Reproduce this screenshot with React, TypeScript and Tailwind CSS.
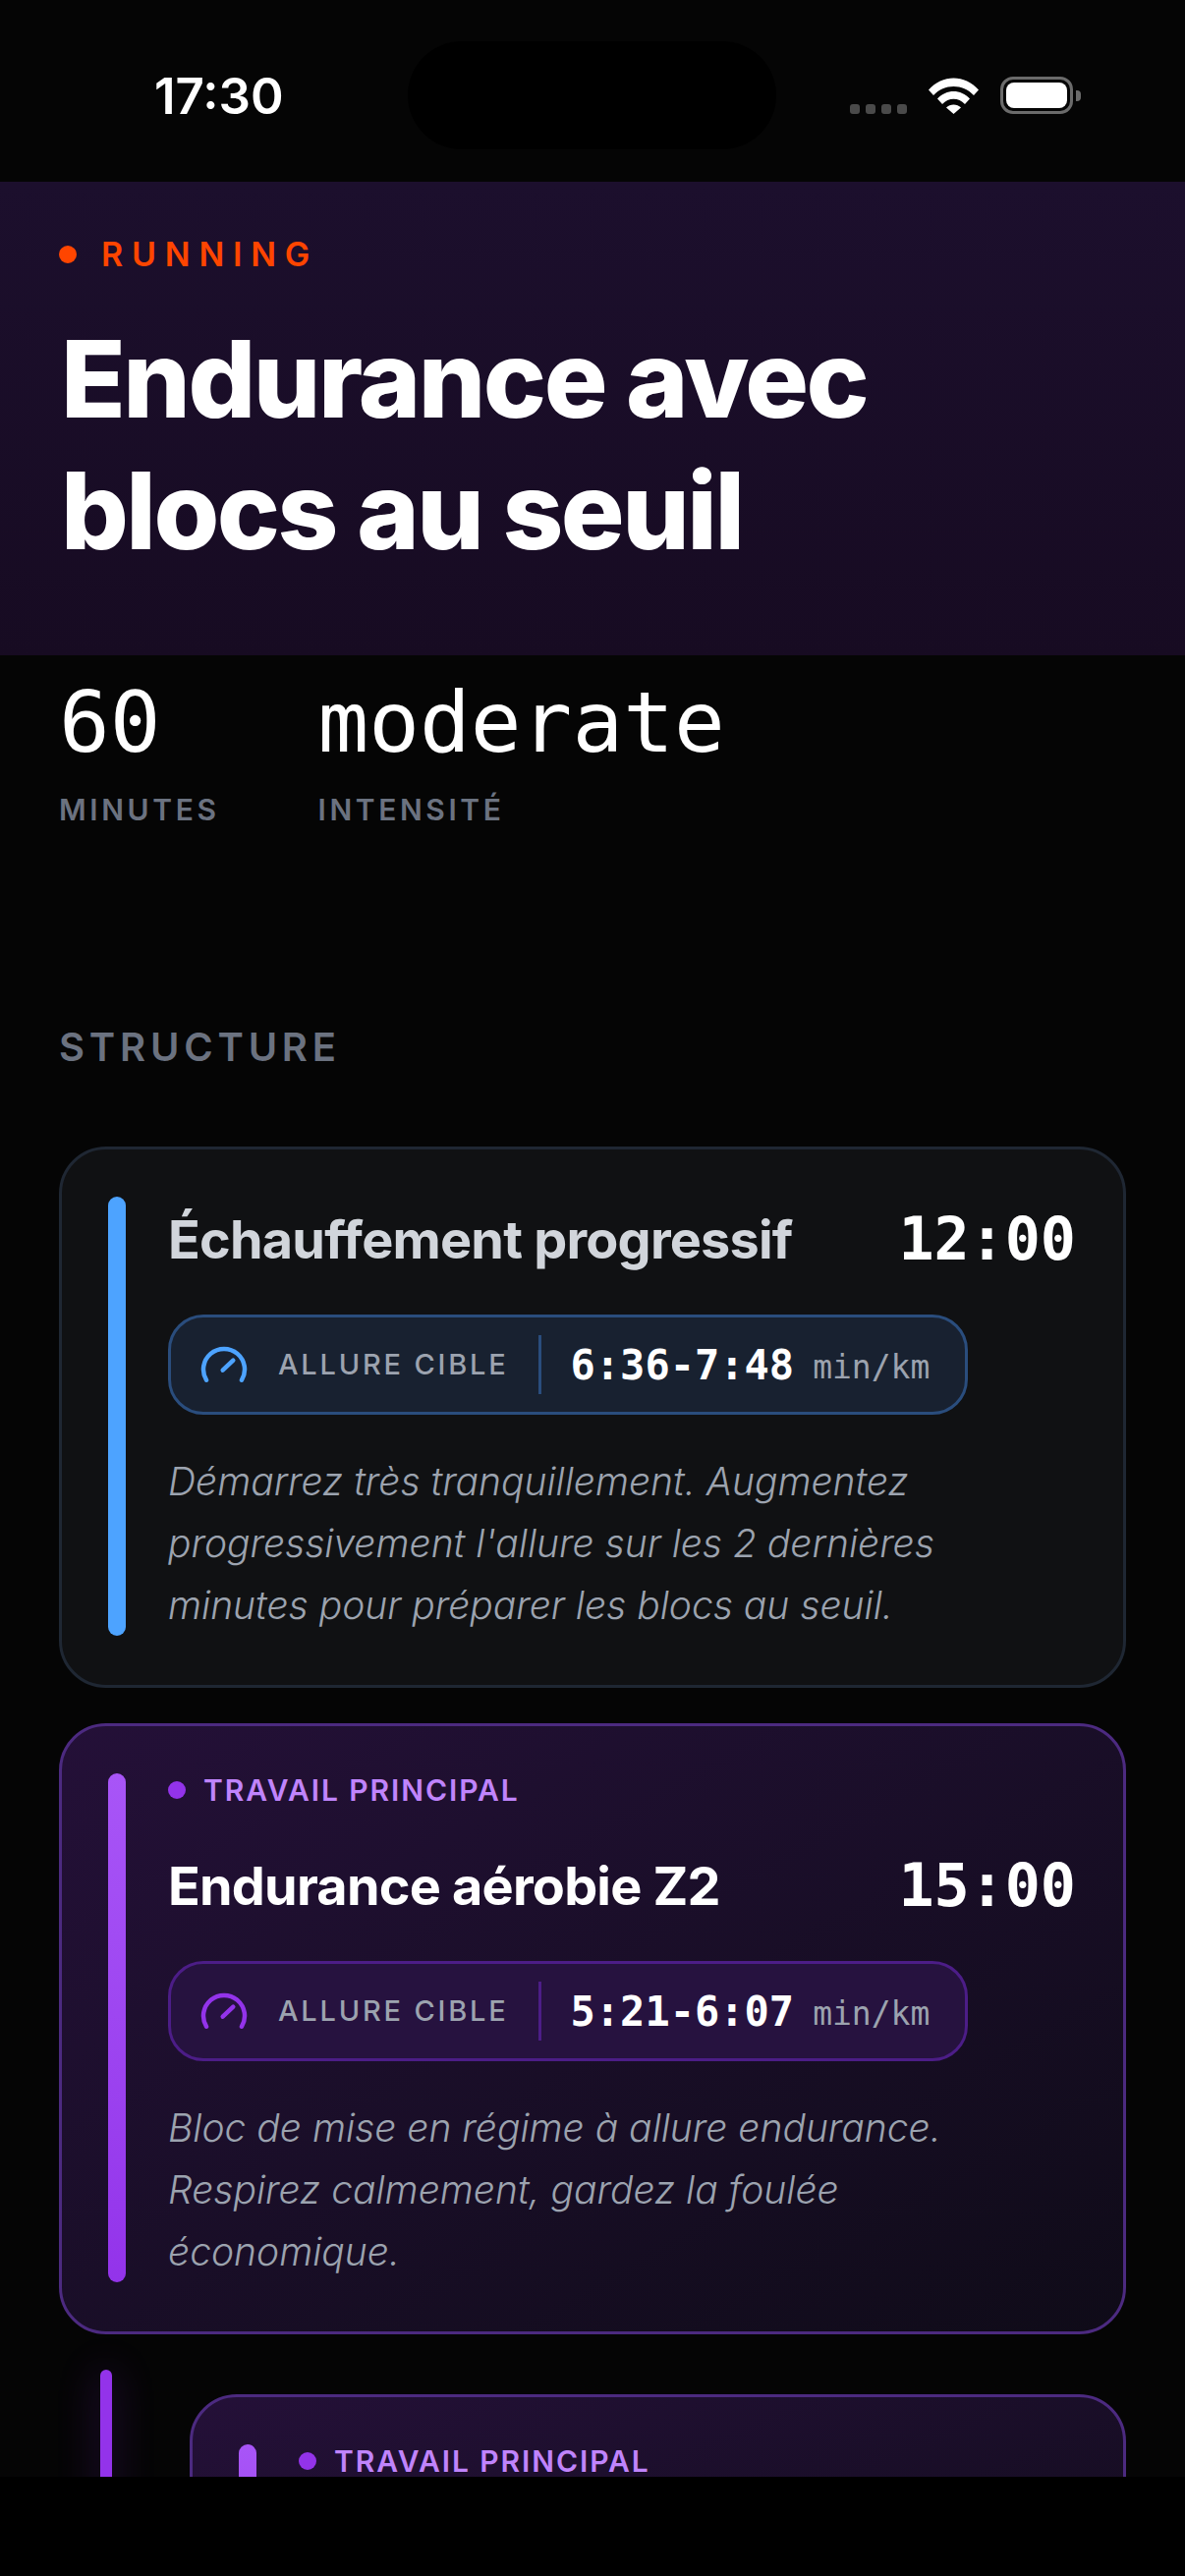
const sans = "font-['Inter',sans-serif]";
const mono = "font-['DejaVu_Sans_Mono',monospace]";

function Gauge({ color }: { color: string }) {
  return (
    <svg width="48" height="40" viewBox="0 0 48 40" fill="none" stroke={color} strokeWidth="4.5" strokeLinecap="round">
      <path d="M6 35.7A21 21 0 1 1 42 35.7" />
      <path d="M22.7 25.7L33.3 15.7" />
    </svg>
  );
}

function StatusBar() {
  return (
    <div className="relative h-[185px] shrink-0 bg-[#050505]">
      <div className="absolute left-[415px] top-[42px] h-[110px] w-[375px] rounded-[55px] bg-black" />
      <div className={`absolute left-[157px] top-[68px] text-[51px] leading-[60px] font-semibold text-white ${sans}`}>17:30</div>
      <div className="absolute left-[865px] top-[106px] flex gap-[6px]">
        <div className="h-[10px] w-[10px] rounded-[3px] bg-[#4a4a4a]" />
        <div className="h-[10px] w-[10px] rounded-[3px] bg-[#4a4a4a]" />
        <div className="h-[10px] w-[10px] rounded-[3px] bg-[#4a4a4a]" />
        <div className="h-[10px] w-[10px] rounded-[3px] bg-[#4a4a4a]" />
      </div>
      <svg className="absolute left-[945px] top-[79px]" width="51" height="37" viewBox="0 0 51 37" fill="white">
        <path d="M0 12.5C14 -3.5 37 -3.5 51 12.5L46 18C35 6 16 6 5 18Z" />
        <path d="M9 21.5C18 11.5 33 11.5 42 21.5L37 27C30.5 20 20.5 20 14 27Z" />
        <path d="M18 30.5C22 26.5 29 26.5 33 30.5L25.5 37Z" />
      </svg>
      <div className="absolute left-[1018px] top-[78px] h-[38px] w-[74px] rounded-[13px] border-[3px] border-[#6b6b6b] p-[3px]">
        <div className="h-full w-full rounded-[8px] bg-white" />
      </div>
      <div className="absolute left-[1095px] top-[92px] h-[11px] w-[5px] rounded-r-[4px] bg-[#6b6b6b]" />
    </div>
  );
}

function Pill({ value, purple }: { value: string; purple?: boolean }) {
  return (
    <div
      className={`flex h-[102px] w-fit items-center rounded-[36px] border-[3px] pl-[30px] pr-[36px] ${
        purple ? "border-[#4c1d87] bg-[#26123f]" : "border-[#2a4d7d] bg-[#182130]"
      }`}
    >
      <Gauge color={purple ? "#9333ea" : "#4da3ff"} />
      <span className={`ml-[31px] text-[29px] font-medium tracking-[2.8px] text-[#9ca3af] ${sans}`}>ALLURE CIBLE</span>
      <div className={`ml-[30px] h-[60px] w-[3px] ${purple ? "bg-[#4c1d87]" : "bg-[#2a4d7d]"}`} />
      <span className={`ml-[30px] text-[42px] font-bold text-white ${mono}`}>{value}</span>
      <span className={`ml-[19px] mt-[5px] text-[33px] text-[#9ca3af] ${mono}`}>min/km</span>
    </div>
  );
}

function Label() {
  return (
    <div className="mb-[37px] flex h-[34px] items-center">
      <div className="h-[18px] w-[18px] rounded-full bg-[#9333ea]" />
      <span className={`ml-[18px] text-[30px] leading-[34px] font-semibold tracking-[1.9px] text-[#c084fc] ${sans}`}>TRAVAIL PRINCIPAL</span>
    </div>
  );
}

const Desc = ({ lines }: { lines: string[] }) => (
  <p className={`mt-[36px] text-[39px] leading-[63px] font-light text-[#9ca3af] italic ${sans}`}>
    {lines.map((l) => (
      <span key={l} className="block whitespace-nowrap">
        {l}
      </span>
    ))}
  </p>
);

function Row({ title, time, muted }: { title: string; time: string; muted?: boolean }) {
  return (
    <div className="flex h-[84px] items-center justify-between pt-[2px]">
      <h3 className={`text-[54px] font-bold tracking-[-0.8px] ${muted ? "text-[#d1d5db]" : "text-white"} ${sans}`}>{title}</h3>
      <span className={`text-[60px] font-bold text-white ${mono}`}>{time}</span>
    </div>
  );
}

export default function App() {
  return (
    <div className="flex h-[2622px] w-[1206px] flex-col overflow-hidden bg-black">
      <StatusBar />
      <div className="h-[2336px] shrink-0 overflow-hidden bg-[#050505]">
        <header className="h-[482px] bg-gradient-to-b from-[#1c0f2d] to-[#170b22] pl-[60px] pt-[54px]">
          <div className="flex items-center">
            <div className="h-[18px] w-[18px] rounded-full bg-[#ff4500]" />
            <span className={`ml-[25px] text-[34px] leading-[40px] font-semibold tracking-[8.8px] text-[#ff4500] ${sans}`}>RUNNING</span>
          </div>
          <h1 className={`ml-[2px] mt-[40px] text-[108px] leading-[134px] font-extrabold tracking-[-2.5px] text-white ${sans}`}>
            Endurance avec
            <br />
            blocs au seuil
          </h1>
        </header>

        <div className="flex gap-[100px] pl-[60px] pt-[27px]">
          <div>
            <div className={`text-[86px] leading-[82px] text-white ${mono}`}>60</div>
            <div className={`mt-[31px] text-[30px] leading-[34px] font-semibold tracking-[3.6px] text-[#6b7280] ${sans}`}>MINUTES</div>
          </div>
          <div>
            <div className={`text-[86px] leading-[82px] text-white ${mono}`}>moderate</div>
            <div className={`mt-[31px] text-[30px] leading-[34px] font-semibold tracking-[3.6px] text-[#6b7280] ${sans}`}>INTENSITÉ</div>
          </div>
        </div>

        <div className={`ml-[60px] mt-[202px] text-[40px] leading-[46px] font-semibold tracking-[4.8px] text-[#6b7280] ${sans}`}>STRUCTURE</div>

        <div className="mx-[60px] mt-[78px] flex flex-col gap-[36px]">
          <section className="flex gap-[43px] rounded-[48px] border-[3px] border-[#1f2733] bg-[#101113] p-[48px] pb-[50px] pl-[47px]">
            <div className="w-[18px] shrink-0 rounded-full bg-[#4da3ff]" />
            <div className="min-w-0 flex-1">
              <Row title="Échauffement progressif" time="12:00" muted />
              <div className="mt-[36px]">
                <Pill value="6:36-7:48" />
              </div>
              <Desc lines={["Démarrez très tranquillement. Augmentez", "progressivement l'allure sur les 2 dernières", "minutes pour préparer les blocs au seuil."]} />
            </div>
          </section>

          <section className="flex gap-[43px] rounded-[48px] border-[3px] border-[#4c2a80] bg-gradient-to-br from-[#241038] to-[#0f0b18] p-[48px] pb-[50px] pl-[47px]">
            <div className="w-[18px] shrink-0 rounded-full bg-gradient-to-b from-[#a855f7] to-[#9333ea]" />
            <div className="min-w-0 flex-1">
              <Label />
              <Row title="Endurance aérobie Z2" time="15:00" />
              <div className="mt-[36px]">
                <Pill value="5:21-6:07" purple />
              </div>
              <Desc lines={["Bloc de mise en régime à allure endurance.", "Respirez calmement, gardez la foulée", "économique."]} />
            </div>
          </section>

          <div className="relative ml-[133px] mt-[25px]">
            <div className="absolute -left-[91px] -top-[25px] h-[400px] w-[12px] rounded-full bg-[#9333ea] shadow-[0_0_40px_#9333ea55]" />
            <section className="flex h-[400px] gap-[43px] rounded-[48px] border-[3px] border-[#4c2a80] bg-gradient-to-br from-[#241038] to-[#0f0b18] p-[48px] pl-[47px]">
              <div className="w-[18px] shrink-0 rounded-full bg-gradient-to-b from-[#a855f7] to-[#9333ea]" />
              <div className="min-w-0 flex-1">
                <Label />
              </div>
            </section>
          </div>
        </div>
      </div>
    </div>
  );
}
